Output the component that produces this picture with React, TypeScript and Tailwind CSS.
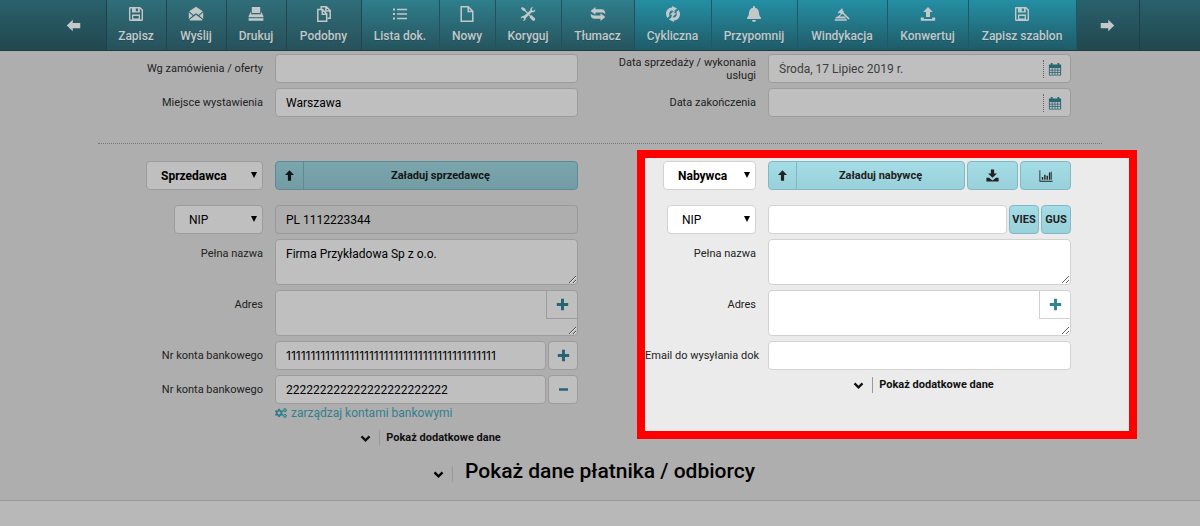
import type { ReactNode } from "react";
import clsx from "clsx";
import { FaBell, FaCogs } from "react-icons/fa";

function Icon({ className, size = 16, children }: { className?: string; size?: number; children: ReactNode }) {
  return (
    <svg viewBox="0 0 16 16" width={size} height={size} fill="currentColor" className={clsx("shrink-0", className)} aria-hidden="true">
      {children}
    </svg>
  );
}

const icons = {
  left: <path d="M.8 8l6.400-6.200v3.400h8v5.600h-8v3.400z" />,
  right: <path d="M15.200 8L8.800 1.800v3.400h-8v5.600h8v3.400z" />,
  up: <path d="M8 .5l6.500 6.800h-4.200V15.500H5.700V7.300H1.500z" />,
  save: <path fillRule="evenodd" d="M1 2.200C1 1.500 1.500 1 2.200 1h10L15 3.800v10c0 .7-.5 1.200-1.200 1.200H2.200c-.7 0-1.200-.5-1.200-1.200zM2.400 2.400v11.200h11.200V4.400l-1.800-2V6.500H4V2.400zM7.800 2.400v2.900h2.200V2.400zM4 8.500h8v5H4zM5.300 9.900h5.400v2.600H5.300z" />,
  mail: (
    <path d="M8 .8l6.800 4.500L10.500 9 8 7.200 5.500 9 1.200 5.300zM.8 6.300L4.700 9.700.8 13zM15.200 6.300L11.300 9.700 15.200 13zM8 8.700l6.600 5.100c-.2.500-.6.700-1 .7H2.400c-.4 0-.8-.2-1-.7z" />
  ),
  print: <path fillRule="evenodd" d="M3.800 1h8.400v6H3.800zM2.400 6.200h.7V8.200h9.800V6.200h.7l1.800 4v1H.6v-1zM.6 12.200h14.800v2.500H.6z" />,
  copy: (
    <g fill="none" stroke="currentColor" strokeWidth="1.500">
      <path d="M5.200 3V.8h5.200l3.800 3.800v7.600h-2.700M9.900 1v4h4" />
      <path d="M1.800 3.600h4.700l4.200 4.200v7.400H1.800zM6.300 3.800v4.400h4.200" />
    </g>
  ),
  list: (
    <path d="M1 2.500h2v2H1zM1 7h2v2H1zM1 11.500h2v2H1zM5 2.800h10v1.400H5zM5 7.300h10v1.400H5zM5 11.800h10v1.400H5z" />
  ),
  file: <path fill="none" stroke="currentColor" strokeWidth="1.500" d="M2.200.8h7l4.600 4.600v9.800H2.200zM9.200 1v4.400h4.400" />,
  tools: (
    <path d="M1 2.200L2.200 1l3 1.700.6 1.700 2.100 2.200 2.400-2.300c-.3-1.700.9-3.300 3-3.300l-1.600 1.900.5 1.500 1.500.4L15.200 3.200c.3 2.100-1.300 3.500-3.400 3.100L9.500 8.500l1 .9c.6-.3 1.200-.2 1.700.3l2.600 2.600c1.300 1.300-.7 3.500-2.200 2.200l-2.500-2.500c-.5-.5-.6-1.200-.3-1.800L8.700 9.300l-3 3c.1 1.700-1.200 2.900-3.100 2.700l1.500-1.800-.6-1.300-1.500-.3L.8 13c-.3-2 1.200-3.500 3.200-3.200l3-2.600-2.200-2L3 4.700z" />
  ),
  swap: (
    <path d="M5.500 1v2.300h6c2.200 0 3.700 1.400 3.700 3.700v1.200c-.8-1-2-1.700-3.700-1.700h-6v2.300L.6 4.900zM10.500 15v-2.300h-6C2.300 12.700.8 11.300.8 9V7.800c.8 1 2 1.700 3.700 1.700h6V7.200l4.900 3.900z" />
  ),
  cycle: (
    <path d="M7 0l5.200 2.600-4.400 3.200-.2-1.600C4.800 4.400 3.600 7 4.600 9.900L2.300 11.900C-.6 7.500 1.600 1.800 7.100 1.500zM9 16l-5.200-2.600 4.400-3.200.2 1.600c2.800-.2 4-2.800 3-5.700l2.300-2c2.900 4.400.7 10.100-4.800 10.400zM10 4.400L9.300 7.200l2.200.2-5.300 4.400.8-3.100-2.200-.2z" />
  ),
  gavel: (
    <path d="M.8 12.500h11.500l-1.500-2H5.500l3-2.800 6 5.800 1.200-1-6.200-5.900.6-.8L8.200 4 9 3.200 8 2.300 3.700 6.500l1 1 .9-.8 1.300 1.200-3.300 2.600H3zM.8 13.300h12v1.500H.8z" />
  ),
  upload: <path d="M8 1l4.800 5H10v5H6V6H3.200zM.8 11.500h3v1.500h8.400v-1.500h3v3.200H.8z" />,
  download: <path d="M6 .5h4v5h3.500L8 10.800 2.500 5.500H6zM.5 10.800h3.300L8 14l4.200-3.200h3.300v4.700H.5z" />,
  chart: <path d="M.5 1.500h1v12h14v1H.5zM3.200 9h1.600v3.300H3.200zM5.900 6.500h1.600v5.800H5.900zM8.600 7.800h1.600v4.500H8.600zM11.300 4h1.600v8.300h-1.600zM13.500 3h1v9.300h-1z" />,
  plus: <path d="M6.200 1h3.600v5.200H15v3.600H9.800V15H6.200V9.800H1V6.200h5.200z" />,
  minus: <path d="M1.500 6.200h13v3.600h-13z" />,
  chevron: <path d="M1 6.200l2.400-2.400L8 8.200l4.600-4.400L15 6.200l-7 6.800z" />,
  calendar: (
    <path fillRule="evenodd" d="M1 2.800h2.200V1h2v1.800h5.600V1h2v1.800H15V15.500H1zM2 6.800v2h2.300v-2zm3.200 0v2h2.300v-2zm3.200 0v2h2.300v-2zm3.200 0v2h2.300v-2zM2 9.700v2h2.300v-2zm3.200 0v2h2.300v-2zm3.200 0v2h2.300v-2zm3.200 0v2h2.300v-2zM2 12.600v2h2.300v-2zm3.200 0v2h2.300v-2zm3.200 0v2h2.300v-2zm3.200 0v2h2.300v-2z" />
  ),
};

const TONES = {
  dark: "from-[#29616d] to-[#22474f] border-[#1f4049]",
  base: "from-[#2f6e79] to-[#27515b] border-[#22464f]",
  mid: "from-[#2f7f8c] to-[#25545e] border-[#23505a]",
  bright: "from-[#248fa4] to-[#1f5b68] border-[#1f5967]",
};

type ToolItem = { label: string; icon: ReactNode; width: string; tone: keyof typeof TONES };

const TOOLS: ToolItem[] = [
  { label: "Zapisz", icon: icons.save, width: "w-[60px]", tone: "base" },
  { label: "Wyślij", icon: icons.mail, width: "w-[60px]", tone: "base" },
  { label: "Drukuj", icon: icons.print, width: "w-[60px]", tone: "base" },
  { label: "Podobny", icon: icons.copy, width: "w-[75px]", tone: "base" },
  { label: "Lista dok.", icon: icons.list, width: "w-[78px]", tone: "mid" },
  { label: "Nowy", icon: icons.file, width: "w-[56px]", tone: "mid" },
  { label: "Koryguj", icon: icons.tools, width: "w-[66px]", tone: "mid" },
  { label: "Tłumacz", icon: icons.swap, width: "w-[73px]", tone: "mid" },
  { label: "Cykliczna", icon: icons.cycle, width: "w-[77px]", tone: "bright" },
  { label: "Przypomnij", icon: null, width: "w-[86px]", tone: "bright" },
  { label: "Windykacja", icon: icons.gavel, width: "w-[90px]", tone: "bright" },
  { label: "Konwertuj", icon: icons.upload, width: "w-[81px]", tone: "bright" },
  { label: "Zapisz szablon", icon: icons.save, width: "w-[108px]", tone: "bright" },
];

function Toolbar() {
  return (
    <nav className="flex h-[51px] border-b border-[#1c3d45] bg-linear-to-b from-[#29616d] to-[#22474f] pr-5 text-[#c3c8c9]">
      <div className="flex-1" />
      <button aria-label="Wstecz" className={clsx("flex w-[66px] items-center justify-center border-r bg-linear-to-b", TONES.dark)}>
        <Icon size={15}>{icons.left}</Icon>
      </button>
      {TOOLS.map((t) => (
        <button
          key={t.label}
          className={clsx("flex shrink-0 flex-col items-center gap-1.5 border-r bg-linear-to-b pt-1.5 text-xs font-medium whitespace-nowrap", t.width, TONES[t.tone])}
        >
          {t.icon ? <Icon>{t.icon}</Icon> : <FaBell className="size-4" />}
          <span className="text-shadow-2xs">{t.label}</span>
        </button>
      ))}
      <button aria-label="Dalej" className={clsx("flex w-[63px] items-center justify-center border-r bg-linear-to-b", TONES.dark)}>
        <Icon size={15}>{icons.right}</Icon>
      </button>
      <div className="flex-1" />
    </nav>
  );
}

const FIELD = "h-[29px] min-w-0 flex-1 rounded border px-2.5 text-xs";
const AREA = "h-[46px] flex-1 rounded border px-2.5 py-1.5 text-xs";
const DIM = "border-[#9c9c9c] bg-[#bfbfbf] text-black";
const LIT = "border-[#d2d2d2] bg-white text-black";
const BLUE_DIM = "border-[#5d8b95] from-[#7ba6ae] to-[#739ca4] text-[#151515]";
const BLUE_LIT = "border-[#80b8c3] from-[#a4dde7] to-[#99d0da] text-[#222]";
const LABEL_LEFT = "w-[165px]";
const LABEL_RIGHT = "w-[111px]";

function Row({ id, label, width, children }: { id: string; label: string; width: string; children: ReactNode }) {
  return (
    <div className="flex items-start gap-3">
      <label htmlFor={id} className={clsx("flex min-h-[29px] shrink-0 flex-col justify-center text-right text-[11px] leading-[13px] text-[#222]", width)}>
        {label}
      </label>
      <div className="flex min-w-0 flex-1 gap-0.5">{children}</div>
    </div>
  );
}

function Picker({ label, lit, className, bold }: { label: string; lit?: boolean; className: string; bold?: boolean }) {
  return (
    <div className={clsx("relative", className)}>
      <select
        aria-label={label}
        className={clsx("h-[29px] w-full appearance-none rounded border pr-5 pl-3.5 text-xs", lit ? LIT : DIM, bold && "font-bold")}
      >
        <option>{label}</option>
      </select>
      <svg viewBox="0 0 6 6" className="pointer-events-none absolute top-[11px] right-1.5 size-1.5" aria-hidden="true">
        <path d="M0 0h6L3 6z" />
      </svg>
    </div>
  );
}

function DateField({ id, value }: { id: string; value: string }) {
  return (
    <div className={clsx("flex flex-1 items-center rounded border pr-2", DIM)}>
      <input id={id} defaultValue={value} className="h-[27px] min-w-0 flex-1 px-2.5 text-xs text-[#3d3d3d]" />
      <button aria-label="Kalendarz" className="flex h-[18px] items-center border-l border-dotted border-[#666] pl-1 text-[#2a6573]">
        <Icon size={14}>{icons.calendar}</Icon>
      </button>
    </div>
  );
}

function LoadButton({ label, lit }: { label: string; lit?: boolean }) {
  return (
    <button className={clsx("flex h-[29px] flex-1 items-center rounded border bg-linear-to-b text-[11px] font-bold", lit ? BLUE_LIT : BLUE_DIM)}>
      <span className={clsx("flex h-full w-7 items-center justify-center border-r", lit ? "border-[#80b8c3]" : "border-[#5d8b95]")}>
        <Icon size={11}>{icons.up}</Icon>
      </span>
      <span className="flex-1 pt-0.5">{label}</span>
    </button>
  );
}

function AddressBox({ id, lit }: { id: string; lit?: boolean }) {
  return (
    <div className="relative flex flex-1">
      <textarea id={id} className={clsx(AREA, lit ? LIT : DIM)} />
      <button
        aria-label="Dodaj adres"
        className={clsx(
          "absolute top-px right-px flex h-7 w-[31px] items-center justify-center border-b border-l",
          lit ? "border-[#d2d2d2] text-[#2f8596]" : "border-[#9c9c9c] text-[#256473]"
        )}
      >
        <Icon size={13}>{icons.plus}</Icon>
      </button>
    </div>
  );
}

function ShowMore({ className }: { className: string }) {
  return (
    <div className={clsx("mt-0.5 flex", className)}>
      <button className="flex h-4 flex-1 items-center justify-center pl-2 text-[11px] font-bold text-[#111]">
        <Icon size={11}>{icons.chevron}</Icon>
        <span className="ml-2 border-l border-[#999] pl-1.5">Pokaż dodatkowe dane</span>
      </button>
    </div>
  );
}

function Seller() {
  return (
    <section className="flex flex-col gap-[5px] pt-[17px] pr-[13px]">
      <div className="mb-2.5 flex gap-3">
        <div className="flex w-[165px] justify-end">
          <Picker label="Sprzedawca" bold className="w-[117px]" />
        </div>
        <LoadButton label="Załaduj sprzedawcę" />
      </div>
      <div className="flex gap-3">
        <div className="flex w-[165px] justify-end">
          <Picker label="NIP" className="w-[89px]" />
        </div>
        <input aria-label="Numer NIP sprzedawcy" defaultValue="PL 1112223344" className={clsx(FIELD, "border-[#999] bg-[#aeaeae] text-black")} />
      </div>
      <Row id="seller-name" label="Pełna nazwa" width={LABEL_LEFT}>
        <textarea id="seller-name" defaultValue="Firma Przykładowa Sp z o.o." className={clsx(AREA, DIM)} />
      </Row>
      <Row id="seller-address" label="Adres" width={LABEL_LEFT}>
        <AddressBox id="seller-address" />
      </Row>
      <Row id="account-1" label="Nr konta bankowego" width={LABEL_LEFT}>
        <input id="account-1" defaultValue="1111111111111111111111111111111111111111111" className={clsx(FIELD, DIM, "font-[Inter,sans-serif]")} />
        <button aria-label="Dodaj konto" className={clsx("flex w-[30px] items-center justify-center rounded border", DIM)}>
          <Icon size={13} className="text-[#256473]">{icons.plus}</Icon>
        </button>
      </Row>
      <Row id="account-2" label="Nr konta bankowego" width={LABEL_LEFT}>
        <input id="account-2" defaultValue="222222222222222222222222" className={clsx(FIELD, DIM)} />
        <button aria-label="Usuń konto" className={clsx("flex w-[30px] items-center justify-center rounded border", DIM)}>
          <Icon size={11} className="text-[#256473]">{icons.minus}</Icon>
        </button>
      </Row>
      <div className="-mt-1 pl-[177px] text-xs text-[#337f8d]">
        <a href="#konta" className="inline-flex items-center gap-1">
          <FaCogs className="size-3" /> zarządzaj kontami bankowymi
        </a>
      </div>
      <ShowMore className="pl-[177px]" />
    </section>
  );
}

function Buyer() {
  return (
    <section className="-mr-[53px] mt-1.5 ml-[46px] flex flex-col gap-[5px] border-8 border-[#fe0000] bg-[#ebebeb] pt-[3px] pr-[58px] pb-[38px]">
      <div className="mb-2.5 flex gap-3">
        <div className="flex w-[111px] justify-end">
          <Picker label="Nabywca" bold lit className="w-[93px]" />
        </div>
        <div className="flex flex-1 gap-0.5">
          <LoadButton label="Załaduj nabywcę" lit />
          <button aria-label="Pobierz" className={clsx("flex w-[51px] items-center justify-center rounded border bg-linear-to-b", BLUE_LIT)}>
            <Icon size={13}>{icons.download}</Icon>
          </button>
          <button aria-label="Statystyki" className={clsx("flex w-[51px] items-center justify-center rounded border bg-linear-to-b", BLUE_LIT)}>
            <Icon size={14}>{icons.chart}</Icon>
          </button>
        </div>
      </div>
      <div className="flex gap-3">
        <div className="flex w-[111px] justify-end">
          <Picker label="NIP" lit className="w-[89px]" />
        </div>
        <div className="flex min-w-0 flex-1 gap-0.5">
          <input aria-label="Numer NIP nabywcy" className={clsx(FIELD, LIT)} />
          <button className={clsx("w-[30px] rounded border bg-linear-to-b pt-0.5 text-[11px] font-bold", BLUE_LIT)}>VIES</button>
          <button className={clsx("w-[30px] rounded border bg-linear-to-b pt-0.5 text-[11px] font-bold", BLUE_LIT)}>GUS</button>
        </div>
      </div>
      <Row id="buyer-name" label="Pełna nazwa" width={LABEL_RIGHT}>
        <textarea id="buyer-name" className={clsx(AREA, LIT)} />
      </Row>
      <Row id="buyer-address" label="Adres" width={LABEL_RIGHT}>
        <AddressBox id="buyer-address" lit />
      </Row>
      <Row id="buyer-email" label="Email do wysyłania dok" width="w-[111px] whitespace-nowrap">
        <input id="buyer-email" type="email" className={clsx(FIELD, LIT)} />
      </Row>
      <ShowMore className="pl-[123px]" />
    </section>
  );
}

export default function App() {
  return (
    <div className="flex min-h-screen flex-col bg-[#aeaeae] font-[Roboto,sans-serif] text-black">
      <Toolbar />
      <main className="mx-auto w-full max-w-[1004px]">
        <div className="grid grid-cols-2 border-b border-dotted border-[#777] pt-[3px] pr-[18px] pb-[26px]">
          <div className="flex flex-col gap-[5px] pr-[13px]">
            <Row id="order" label="Wg zamówienia / oferty" width={LABEL_LEFT}>
              <input id="order" className={clsx(FIELD, DIM)} />
            </Row>
            <Row id="place" label="Miejsce wystawienia" width={LABEL_LEFT}>
              <input id="place" defaultValue="Warszawa" className={clsx(FIELD, DIM)} />
            </Row>
          </div>
          <div className="flex flex-col gap-[5px] pr-[13px]">
            <Row id="sale-date" label="Data sprzedaży / wykonania usługi" width="w-[165px] pl-4">
              <DateField id="sale-date" value="Środa, 17 Lipiec 2019 r." />
            </Row>
            <Row id="end-date" label="Data zakończenia" width={LABEL_LEFT}>
              <DateField id="end-date" value="" />
            </Row>
          </div>
        </div>
        <div className="grid grid-cols-2 items-start pr-[18px]">
          <Seller />
          <Buyer />
        </div>
        <button className="mx-auto mt-3 mb-3.5 flex h-7 items-center pr-3 text-[21px] font-medium">
          <Icon size={11} className="mt-1">{icons.chevron}</Icon>
          <span className="mt-1 ml-2 h-4 border-l border-[#999]" />
          <span className="pl-3">Pokaż dane płatnika / odbiorcy</span>
        </button>
      </main>
      <footer className="flex-1 border-t border-[#999] bg-[#b8b8b8]" />
    </div>
  );
}
